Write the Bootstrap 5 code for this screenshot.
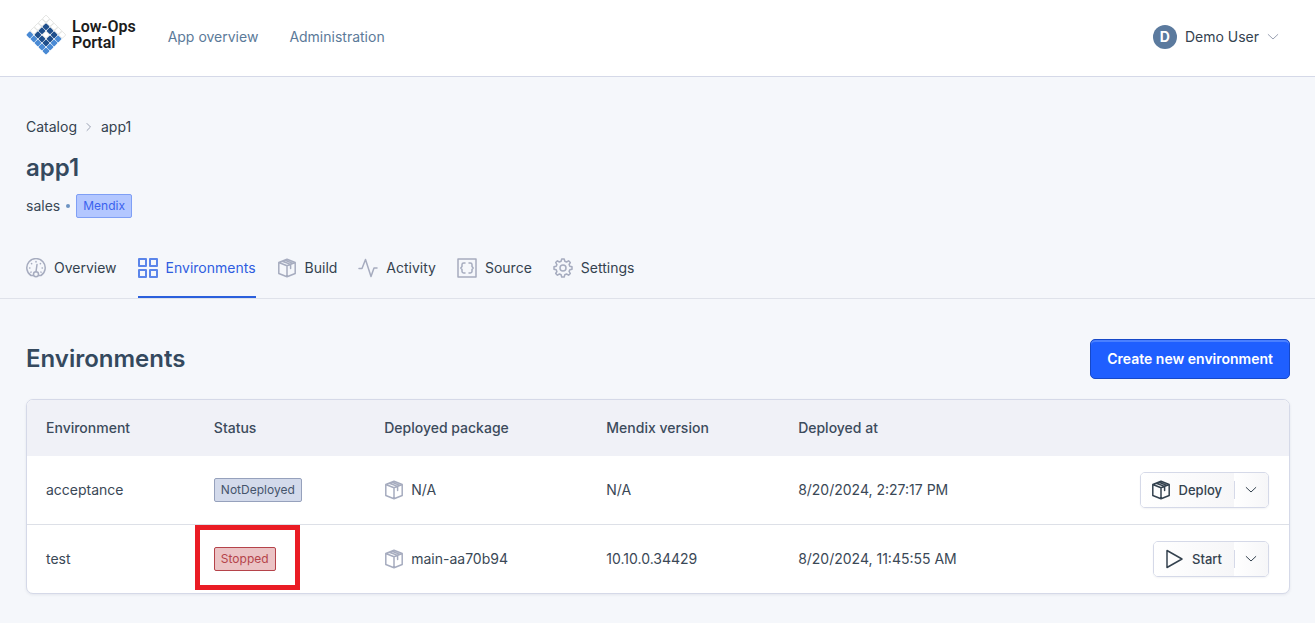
<!DOCTYPE html>
<html lang="en">
<head>
<meta charset="utf-8">
<meta name="viewport" content="width=device-width, initial-scale=1">
<title>app1 - Low-Ops Portal</title>
<link href="https://cdn.jsdelivr.net/npm/bootstrap@5.3.0/dist/css/bootstrap.min.css" rel="stylesheet">
<style>
  :root { --ink: #34495e; --line: #d5d9e8; --muted-icon: #a6acbf; --brand: #1f5fff; }
  body { font-family: Inter, "Liberation Sans", sans-serif; font-size: 14px; line-height: 24px; color: #3a4856; background: #f5f7fb; }
  .icon { width: 20px; height: 20px; flex: none; fill: none; stroke: currentColor; stroke-width: 1.5; stroke-linejoin: round; stroke-linecap: round; }
  .icon-bold { stroke-width: 2; }
  .icon-sm { width: 12px; height: 12px; flex: none; fill: none; stroke: currentColor; stroke-width: 1; stroke-linecap: round; stroke-linejoin: round; }
  .icon-soft { color: #9aa1b2; }
  .page-pad { padding-left: 26px; padding-right: 25px; }

  .topbar { min-height: 77px; padding-bottom: 2px; border-bottom: 1px solid var(--line); }
  .brand-logo { width: 40px; height: 40px; }
  .brand-name { font-family: Roboto, sans-serif; font-weight: 600; font-size: 16px; line-height: 16px; color: #1c1c1c; }
  .brand-link { gap: 6px; margin-right: 32px; padding-bottom: 4px; }
  .top-link { color: #5b7a99; text-decoration: none; margin-right: 31px; }
  .user-btn { gap: 8px; padding: 0 11px; color: #34424f; border: 0; background: none; }
  .avatar { width: 24px; height: 24px; border-radius: 50%; background: #5b7a9e; color: #fff; font-weight: 700; line-height: 24px; text-align: center; }

  .crumbs { padding-top: 38px; gap: 6px; }
  .crumbs a, .crumbs span { color: #34424f; text-decoration: none; }
  h1, h2 { font-weight: 600; font-size: 24px; line-height: 32px; color: var(--ink); margin: 0; }
  h1 { margin-top: 13px; }
  .meta-row { gap: 6px; margin-top: 10px; }
  .dot { width: 4px; height: 4px; border-radius: 50%; background: #6c93c2; }
  .tag { display: inline-block; font-size: 12px; line-height: 22px; padding: 0 6px; border: 1px solid; border-radius: 2px; vertical-align: middle; }
  .tag-blue { color: #3a62ee; background: #b3c7ff; border-color: #7f9ff5; }
  .tag-grey { color: #45546b; background: #d3daeb; border-color: #96a1bc; }
  .tag-red { color: #b5434a; background: #ebc3c5; border-color: #b5434a; }

  .tabs { margin-top: 30px; border-bottom: 1px solid #dfe2ea; gap: 21px; }
  .tabs a { display: flex; align-items: center; gap: 8px; height: 50px; padding-bottom: 10px; color: #34424f; text-decoration: none; }
  .tabs .icon { color: var(--muted-icon); }
  .tabs a.active { color: #2f5de0; box-shadow: inset 0 -2px #2b5fdc; }
  .tabs a.active .icon { color: #5b85ea; }

  .section-head { margin-top: 40px; margin-bottom: 20px; }
  .btn-create { font-size: 14px; font-weight: 600; line-height: 20px; padding: 9px 16px; color: #fff; background: var(--brand); border: 1px solid #1648c8; border-radius: 5px; box-shadow: inset 0 2px #4a80ff; }
  .btn-create:hover { color: #fff; background: #174fe0; }
  .env-card { background: #fff; border: 1px solid var(--line); border-radius: 7px; overflow: hidden; box-shadow: 0 1px 3px #1b2b5014; }
  .env-table { width: 100%; table-layout: fixed; }
  .env-table th { height: 56px; padding: 0 19px; font-weight: 500; background: #f0f1f7; color: #3c4b5c; }
  .env-table td { height: 68px; padding: 0 20px 0 19px; }
  .env-table tr + tr td { height: 69px; border-top: 1px solid #dde0e7; }
  .c-name { width: 13.3%; } .c-status { width: 13.5%; } .c-pack { width: 17.6%; } .c-ver { width: 15.2%; }
  .pack { gap: 7px; }
  .pack .icon { color: var(--muted-icon); }
  .split { border: 1px solid var(--line); border-radius: 5px; box-shadow: 0 1px 2px #1b2b500f; overflow: hidden; }
  .split .btn { font-size: 13px; font-weight: 500; border: 0; border-radius: 0; height: 34px; color: #34424f; background: linear-gradient(90deg, #fff, #f6f6f8); }
  .split .main-act { gap: 8px; padding: 1px 12px 0 10px; }
  .split .more-act { position: relative; padding: 0 11px; display: flex; align-items: center; }
  .split .more-act::before { content: ""; position: absolute; left: 0; top: 8px; bottom: 8px; width: 1px; background: var(--line); }
  .callout { position: absolute; left: 0; top: 0; width: 105px; height: 65px; border: 5px solid #ea1c24; pointer-events: none; }
</style>
</head>
<body>
<svg class="d-none" aria-hidden="true">
  <symbol id="i-box" viewBox="0 0 20 20">
    <path d="M1.800 4.500 10 1.300l8.200 3.200v11L10 18.700l-8.200-3.200zM1.800 4.500 10 7.800l8.200-3.300M10 7.800v10.900M5.300 3.200l8.300 3.200v4M8 2.200l7.800 3.200"/>
  </symbol>
  <symbol id="i-down" viewBox="0 0 12 12"><path d="M1.200 3.500 6 8l4.800-4.500"/></symbol>
</svg>

<header class="topbar page-pad bg-white d-flex align-items-center">
  <a href="#" class="brand-link d-flex align-items-center text-decoration-none">
    <svg class="brand-logo" viewBox="0 0 84 84" aria-hidden="true">
      <defs><rect id="c" width="11" height="11" rx="2"/></defs>
      <g transform="translate(42 0) rotate(45)">
        <g fill="#fff" stroke="#c9cbc8" stroke-width="1">
          <use href="#c"/><use href="#c" x="12"/><use href="#c" x="24"/><use href="#c" x="36"/><use href="#c" x="48"/>
          <use href="#c" y="12"/><use href="#c" y="24"/><use href="#c" y="36"/><use href="#c" x="24" y="24"/>
        </g>
        <g fill="#1f4f8c">
          <use href="#c" x="12" y="12"/><use href="#c" x="24" y="12"/><use href="#c" x="36" y="12"/>
          <use href="#c" x="12" y="24"/><use href="#c" x="36" y="24"/>
          <use href="#c" x="12" y="36"/><use href="#c" x="24" y="36"/><use href="#c" x="36" y="36"/>
        </g>
        <g fill="#4a8ad4">
          <use href="#c" y="48"/><use href="#c" x="12" y="48"/><use href="#c" x="24" y="48"/><use href="#c" x="36" y="48"/><use href="#c" x="48" y="48"/>
          <use href="#c" x="48" y="12"/><use href="#c" x="48" y="24"/><use href="#c" x="48" y="36"/>
        </g>
      </g>
    </svg>
    <span class="brand-name">Low-Ops<br>Portal</span>
  </a>
  <nav class="d-flex" aria-label="Main">
    <a class="top-link" href="#">App overview</a>
    <a class="top-link" href="#">Administration</a>
  </nav>
  <button type="button" class="user-btn d-flex align-items-center ms-auto">
    <span class="avatar">D</span>Demo User
    <svg class="icon-sm icon-soft" aria-hidden="true"><use href="#i-down"/></svg>
  </button>
</header>

<main>
  <div class="page-pad">
    <nav class="crumbs d-flex align-items-center" aria-label="Breadcrumb">
      <a href="#">Catalog</a>
      <svg class="icon-sm icon-soft" viewBox="0 0 12 12" aria-hidden="true"><path d="M4 2.500 7.500 6 4 9.500"/></svg>
      <span>app1</span>
    </nav>
    <h1>app1</h1>
    <div class="meta-row d-flex align-items-center"><span>sales</span><span class="dot"></span><span class="tag tag-blue">Mendix</span></div>
  </div>

  <nav class="tabs page-pad d-flex" aria-label="App sections">
    <a href="#"><svg class="icon" viewBox="0 0 20 20" aria-hidden="true"><path d="M7 17.500H5A9.200 9.200 0 1 1 15 17.500h-2"/><circle cx="10" cy="16.200" r="2.500"/><path d="M10 13.700 11 6.500M10 3.600v.3M5.500 5.500l.2.200M14.500 5.500l-.2.200M3.600 10h.3M16.100 10h.3M4.900 14.200l.2-.1M15.100 14.200l-.2-.1"/></svg>Overview</a>
    <a href="#" class="active" aria-current="page"><svg class="icon icon-bold" viewBox="0 0 20 20" aria-hidden="true"><path d="M1 1h7v7H1zM12 1h7v7h-7zM1 12h7v7H1zM12 12h7v7h-7z"/></svg>Environments</a>
    <a href="#"><svg class="icon" aria-hidden="true"><use href="#i-box"/></svg>Build</a>
    <a href="#"><svg class="icon" viewBox="0 0 20 20" aria-hidden="true"><path d="M1 10.500h3L7.500 1.500l5.500 17 3-8.500h3"/></svg>Activity</a>
    <a href="#"><svg class="icon" viewBox="0 0 20 20" aria-hidden="true"><path d="M1 1h18v18H1zM8 5H6.700q-1.700 0-1.700 1.400v2.200L3.800 10 5 11.400v2.200q0 1.400 1.700 1.400H8M12 5h1.300q1.700 0 1.700 1.400v2.200l1.200 1.400-1.200 1.400v2.200q0 1.400-1.700 1.400H12"/></svg>Source</a>
    <a href="#"><svg class="icon" viewBox="0 0 20 20" aria-hidden="true"><circle cx="10" cy="10" r="3"/><path d="m8.700 1-.6 2.300-1.700.7-2-1.200-1.700 1.700 1.200 2.100-.7 1.600L1 8.800v2.400l2.200.6.7 1.700-1.200 2 1.700 1.700 2.100-1.200 1.600.7.600 2.300h2.500l.6-2.300 1.700-.7 2.100 1.200 1.700-1.700-1.200-2.100.7-1.600 2.200-.6V8.800l-2.200-.6-.7-1.700 1.200-2-1.700-1.700-2.100 1.200-1.700-.7L11.200 1z"/></svg>Settings</a>
  </nav>

  <section class="page-pad pb-4">
    <div class="section-head d-flex align-items-center justify-content-between">
      <h2>Environments</h2>
      <button type="button" class="btn btn-create">Create new environment</button>
    </div>
    <div class="env-card">
      <table class="env-table">
        <thead><tr>
          <th class="c-name" scope="col">Environment</th><th class="c-status" scope="col">Status</th><th class="c-pack" scope="col">Deployed package</th><th class="c-ver" scope="col">Mendix version</th><th scope="col">Deployed at</th><th scope="col" aria-label="Actions"></th>
        </tr></thead>
        <tbody>
          <tr>
            <td>acceptance</td>
            <td><span class="tag tag-grey">NotDeployed</span></td>
            <td><div class="pack d-flex align-items-center"><svg class="icon" aria-hidden="true"><use href="#i-box"/></svg>N/A</div></td>
            <td>N/A</td>
            <td>8/20/2024, 2:27:17 PM</td>
            <td><div class="d-flex justify-content-end"><div class="split d-flex">
              <button type="button" class="btn main-act d-flex align-items-center"><svg class="icon" aria-hidden="true"><use href="#i-box"/></svg>Deploy</button>
              <button type="button" class="btn more-act" aria-label="More deploy options"><svg class="icon-sm" aria-hidden="true"><use href="#i-down"/></svg></button>
            </div></div></td>
          </tr>
          <tr>
            <td>test</td>
            <td class="position-relative"><span class="tag tag-red">Stopped</span><span class="callout"></span></td>
            <td><div class="pack d-flex align-items-center"><svg class="icon" aria-hidden="true"><use href="#i-box"/></svg>main-aa70b94</div></td>
            <td>10.10.0.34429</td>
            <td>8/20/2024, 11:45:55 AM</td>
            <td><div class="d-flex justify-content-end"><div class="split d-flex">
              <button type="button" class="btn main-act d-flex align-items-center"><svg class="icon" viewBox="0 0 20 20" aria-hidden="true"><path d="M3 1.500v17L18 10z"/></svg>Start</button>
              <button type="button" class="btn more-act" aria-label="More start options"><svg class="icon-sm" aria-hidden="true"><use href="#i-down"/></svg></button>
            </div></div></td>
          </tr>
        </tbody>
      </table>
    </div>
  </section>
</main>
<script src="https://cdn.jsdelivr.net/npm/bootstrap@5.3.0/dist/js/bootstrap.bundle.min.js"></script>
</body>
</html>
